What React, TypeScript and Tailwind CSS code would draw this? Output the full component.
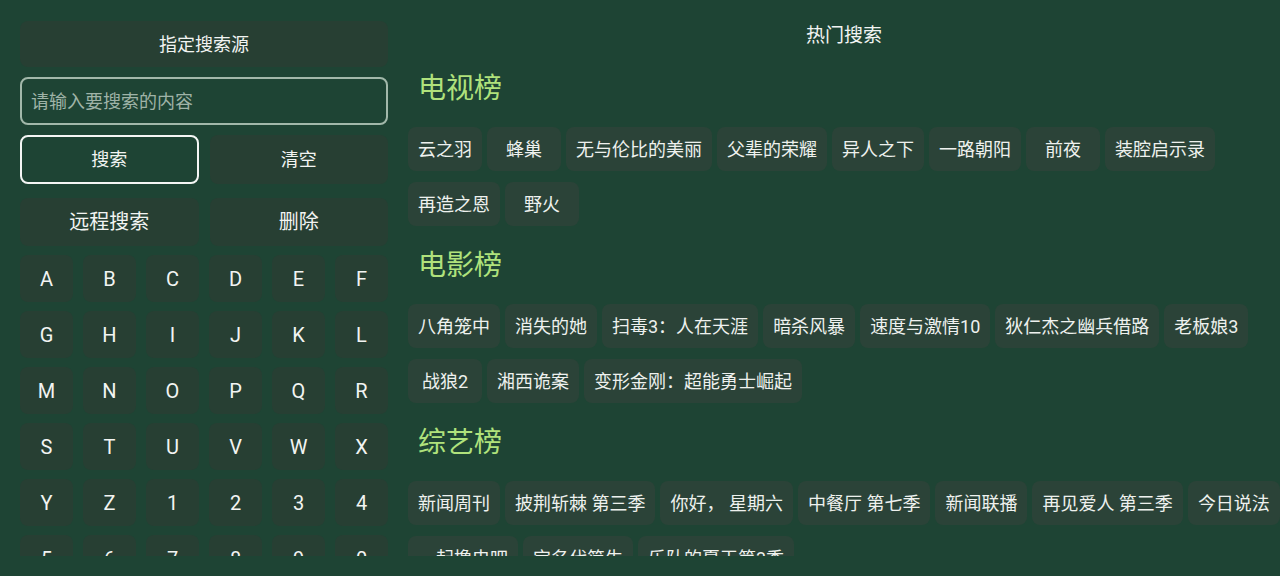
const KEYS = 'ABCDEFGHIJKLMNOPQRSTUVWXYZ1234567890'.split('')

const SECTIONS: { title: string; items: string[] }[] = [
  {
    title: '电视榜',
    items: ['云之羽', '蜂巢', '无与伦比的美丽', '父辈的荣耀', '异人之下', '一路朝阳', '前夜', '装腔启示录', '再造之恩', '野火'],
  },
  {
    title: '电影榜',
    items: ['八角笼中', '消失的她', '扫毒3：人在天涯', '暗杀风暴', '速度与激情10', '狄仁杰之幽兵借路', '老板娘3', '战狼2', '湘西诡案', '变形金刚：超能勇士崛起'],
  },
  {
    title: '综艺榜',
    items: ['新闻周刊', '披荆斩棘 第三季', '你好， 星期六', '中餐厅 第七季', '新闻联播', '再见爱人 第三季', '今日说法', '一起撸电吧', '宝名代简生', '乐队的夏天第3季'],
  },
]

function Chip({ label }: { label: string }) {
  return (
    <div className="h-[44px] min-w-[74px] px-[10px] rounded-lg bg-[#2b4338] flex items-center justify-center text-[18px] text-[#eef1ee] whitespace-nowrap">
      {label}
    </div>
  )
}

export default function App() {
  return (
    <div
      className="w-[1280px] h-[576px] bg-[#1e4434] text-[#f2f4f2] pb-5 overflow-hidden"
      style={{ fontFamily: "Roboto, 'Noto Sans CJK SC', sans-serif" }}
    >
      <div className="flex h-full gap-5 pl-5">
        {/* 左侧：搜索栏 + 键盘 */}
        <div className="w-[368px] shrink-0 pt-[21px] overflow-hidden">
          <div className="h-[46px] rounded-lg bg-[#273f33] flex items-center justify-center text-[18px]">
            指定搜索源
          </div>
          <div className="mt-[10px] h-[48px] rounded-lg border-2 border-[#a2b8aa] flex items-center pl-[9px] text-[18px] text-[#9fb3a7]">
            请输入要搜索的内容
          </div>
          <div className="mt-[10px] grid grid-cols-2 gap-[11px] text-[18px]">
            <div className="h-[49px] rounded-lg border-2 border-[#f4f6f4] flex items-center justify-center">搜索</div>
            <div className="h-[49px] rounded-lg bg-[#273f33] flex items-center justify-center">清空</div>
          </div>
          <div className="mt-[14px] grid grid-cols-2 gap-[11px] text-[20px]">
            <div className="h-[48px] rounded-lg bg-[#273f33] flex items-center justify-center">远程搜索</div>
            <div className="h-[48px] rounded-lg bg-[#273f33] flex items-center justify-center">删除</div>
          </div>
          <div className="mt-[9px] grid grid-cols-6 gap-x-[10px] gap-y-[9px]">
            {KEYS.map(k => (
              <div key={k} className="h-[47px] rounded-lg bg-[#273f33] flex items-center justify-center text-[20px]">
                {k}
              </div>
            ))}
          </div>
        </div>

        {/* 右侧：热门搜索 */}
        <div className="flex-1 min-w-0 overflow-hidden pt-[23px]">
          <div className="text-center text-[19px] leading-[26px]">热门搜索</div>
          {SECTIONS.map(s => (
            <div key={s.title}>
              <div className="mt-[22px] mb-[21px] pl-[10px] text-[28px] leading-[35px] text-[#b0e27c]">{s.title}</div>
              <div className="flex flex-wrap gap-x-[5px] gap-y-[11px]">
                {s.items.map(it => <Chip key={it} label={it} />)}
              </div>
            </div>
          ))}
        </div>
      </div>
    </div>
  )
}
